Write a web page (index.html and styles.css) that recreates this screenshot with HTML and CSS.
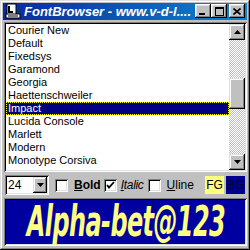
FILE: index.html
```html
<!DOCTYPE html>
<html lang="en">
<head>
    <meta charset="UTF-8">
    <title>FontBrowser</title>
    <link rel="stylesheet" href="styles.css">
</head>
<body>
    <div class="window">
        <div class="titlebar">
            <svg class="app-icon" width="16" height="16" viewBox="0 0 16 16">
                <rect x="2" y="1" width="9" height="11" fill="#fff" stroke="#000"/>
                <path d="M4 3v6h4" fill="none" stroke="#000" stroke-width="2"/>
                <rect x="1" y="11" width="14" height="4" fill="#fff" stroke="#000"/>
                <path d="M3 13h10" stroke="#000"/>
            </svg>
            <span class="title">FontBrowser - www.v-d-l....</span>
            <div class="caption-buttons">
                <div class="cap-btn">
                    <svg width="8" height="7" viewBox="0 0 8 7"><rect x="0" y="5" width="6" height="2" fill="#000"/></svg>
                </div>
                <div class="cap-btn">
                    <svg width="9" height="9" viewBox="0 0 9 9"><rect x="0.5" y="0.5" width="8" height="8" fill="none" stroke="#000"/><rect x="0" y="0" width="9" height="2" fill="#000"/></svg>
                </div>
                <div class="cap-btn close">
                    <svg width="8" height="7" viewBox="0 0 8 7"><path d="M0.5 0.5L7.5 6.5M7.5 0.5L0.5 6.5" stroke="#000" stroke-width="1.6"/></svg>
                </div>
            </div>
        </div>

        <div class="listbox">
            <ul class="font-list">
                <li>Courier New</li>
                <li>Default</li>
                <li>Fixedsys</li>
                <li>Garamond</li>
                <li>Georgia</li>
                <li>Haettenschweiler</li>
                <li class="selected">Impact</li>
                <li>Lucida Console</li>
                <li>Marlett</li>
                <li>Modern</li>
                <li>Monotype Corsiva</li>
            </ul>
            <div class="scrollbar">
                <div class="sb-btn">
                    <svg width="7" height="4" viewBox="0 0 7 4"><path d="M3.5 0L7 4H0z" fill="#000"/></svg>
                </div>
                <div class="sb-track">
                    <div class="sb-thumb"></div>
                </div>
                <div class="sb-btn">
                    <svg width="7" height="4" viewBox="0 0 7 4"><path d="M0 0h7L3.5 4z" fill="#000"/></svg>
                </div>
            </div>
        </div>

        <div class="toolbar">
            <div class="combo">
                <span class="combo-value">24</span>
                <div class="combo-btn">
                    <svg width="7" height="4" viewBox="0 0 7 4"><path d="M0 0h7L3.5 4z" fill="#000"/></svg>
                </div>
            </div>
            <span class="check"></span>
            <span class="opt bold"><u>B</u>old</span>
            <span class="check checked">
                <svg width="9" height="9" viewBox="0 0 9 9"><path d="M1 4l2 2.5L8 1" fill="none" stroke="#000" stroke-width="1.8"/></svg>
            </span>
            <span class="opt italic"><u>I</u>talic</span>
            <span class="check"></span>
            <span class="opt"><u>U</u>line</span>
            <div class="colors">
                <div class="color-btn fg">FG</div>
                <div class="color-btn bg">BG</div>
            </div>
        </div>

        <div class="preview">
            <span class="sample">Alpha-bet@123</span>
        </div>
    </div>
</body>
</html>
```

FILE: styles.css
```css
body, html {
    margin: 0;
    padding: 0;
    background-color: #c0c0c0;
    font-family: "Liberation Sans", Arial, sans-serif;
}

.window {
    width: 250px;
    height: 250px;
    box-sizing: border-box;
    padding: 3px 3px 4px 4px;
    display: flex;
    flex-direction: column;
    gap: 2px;
    background-color: #c0c0c0;
    box-shadow: inset -1px -1px #000, inset 1px 1px #dfdfdf, inset -2px -2px #808080, inset 2px 2px #fff;
}

.titlebar {
    height: 17px;
    margin-left: -1px;
    display: flex;
    align-items: center;
    padding: 0 2px 0 2px;
    background: linear-gradient(to right, #0a2a9a, #1084d0);
    color: white;
}

.app-icon {
    flex: none;
    margin-right: 3px;
}

.title {
    flex: 1;
    font-size: 13px;
    font-weight: bold;
    font-style: italic;
    white-space: nowrap;
    overflow: hidden;
}

.caption-buttons {
    display: flex;
}

.cap-btn {
    width: 16px;
    height: 14px;
    box-sizing: border-box;
    background-color: #c0c0c0;
    display: flex;
    align-items: center;
    justify-content: center;
    box-shadow: inset -1px -1px #000, inset 1px 1px #fff, inset -2px -2px #808080, inset 2px 2px #dfdfdf;
}

.cap-btn.close {
    margin-left: 2px;
}

.listbox {
    height: 151px;
    box-sizing: border-box;
    padding: 2px;
    display: flex;
    background-color: #fff;
    box-shadow: inset 1px 1px #808080, inset -1px -1px #fff, inset 2px 2px #000, inset -2px -2px #dfdfdf;
}

.font-list {
    flex: 1;
    margin: 0;
    padding: 0;
    list-style: none;
    overflow: hidden;
}

.font-list li {
    height: 13px;
    line-height: 13px;
    font-size: 11px;
    padding-left: 2px;
    color: #000;
    white-space: nowrap;
}

.font-list li.selected {
    background-color: #000080;
    color: #fff;
    outline: 1px dotted #ffff00;
    outline-offset: -1px;
}

.scrollbar {
    width: 16px;
    display: flex;
    flex-direction: column;
}

.sb-btn {
    height: 16px;
    flex: none;
    display: flex;
    align-items: center;
    justify-content: center;
    background-color: #c0c0c0;
    box-shadow: inset -1px -1px #000, inset 1px 1px #dfdfdf, inset -2px -2px #808080, inset 2px 2px #fff;
}

.sb-track {
    flex: 1;
    padding-top: 38px;
    background-color: #c0c0c0;
    background-image: conic-gradient(#fff 25%, #c0c0c0 0 50%, #fff 0 75%, #c0c0c0 0);
    background-size: 2px 2px;
}

.sb-thumb {
    height: 31px;
    background-color: #c0c0c0;
    box-shadow: inset -1px -1px #000, inset 1px 1px #dfdfdf, inset -2px -2px #808080, inset 2px 2px #fff;
}

.toolbar {
    height: 22px;
    display: flex;
    align-items: center;
    font-size: 12px;
    color: #000;
}

.combo {
    width: 44px;
    height: 20px;
    box-sizing: border-box;
    padding: 2px;
    display: flex;
    background-color: #fff;
    box-shadow: inset 1px 1px #808080, inset -1px -1px #fff, inset 2px 2px #000, inset -2px -2px #dfdfdf;
    margin-left: 1px;
    margin-right: 6px;
}

.combo-value {
    flex: 1;
    font-size: 12px;
    line-height: 16px;
    padding-left: 1px;
}

.combo-btn {
    width: 14px;
    display: flex;
    align-items: center;
    justify-content: center;
    background-color: #c0c0c0;
    box-shadow: inset -1px -1px #000, inset 1px 1px #dfdfdf, inset -2px -2px #808080, inset 2px 2px #fff;
}

.check {
    width: 13px;
    height: 13px;
    box-sizing: border-box;
    background-color: #fff;
    display: flex;
    align-items: center;
    justify-content: center;
    box-shadow: inset 1px 1px #808080, inset -1px -1px #fff, inset 2px 2px #000, inset -2px -2px #dfdfdf;
    margin-right: 6px;
}

.opt {
    margin-right: 4px;
}

.opt.bold {
    font-weight: bold;
    font-size: 12px;
    margin-right: 3px;
}

.opt.italic {
    font-style: italic;
    font-size: 12px;
    letter-spacing: -0.3px;
    margin-left: -2px;
}

.colors {
    margin-left: auto;
    display: flex;
    margin-right: 1px;
}

.color-btn {
    width: 21px;
    height: 20px;
    box-sizing: border-box;
    display: flex;
    align-items: center;
    justify-content: center;
    font-size: 12px;
    color: #000;
    border: 1px solid #c0c0c0;
}

.color-btn.fg {
    background-color: #ffff80;
}

.color-btn.bg {
    background-color: #000090;
    color: #00003a;
}

.preview {
    height: 48px;
    box-sizing: border-box;
    padding: 2px;
    display: flex;
    align-items: center;
    justify-content: center;
    background-color: #0000a0;
    box-shadow: inset 1px 1px #808080, inset -1px -1px #fff, inset 2px 2px #000, inset -2px -2px #dfdfdf;
    overflow: hidden;
}

.sample {
    display: inline-block;
    flex: none;
    font-family: "DejaVu Sans", sans-serif;
    font-weight: bold;
    font-style: italic;
    font-size: 42px;
    line-height: 42px;
    color: #ffff80;
    transform: scaleX(0.57);
    white-space: nowrap;
    letter-spacing: -1px;
}
```
